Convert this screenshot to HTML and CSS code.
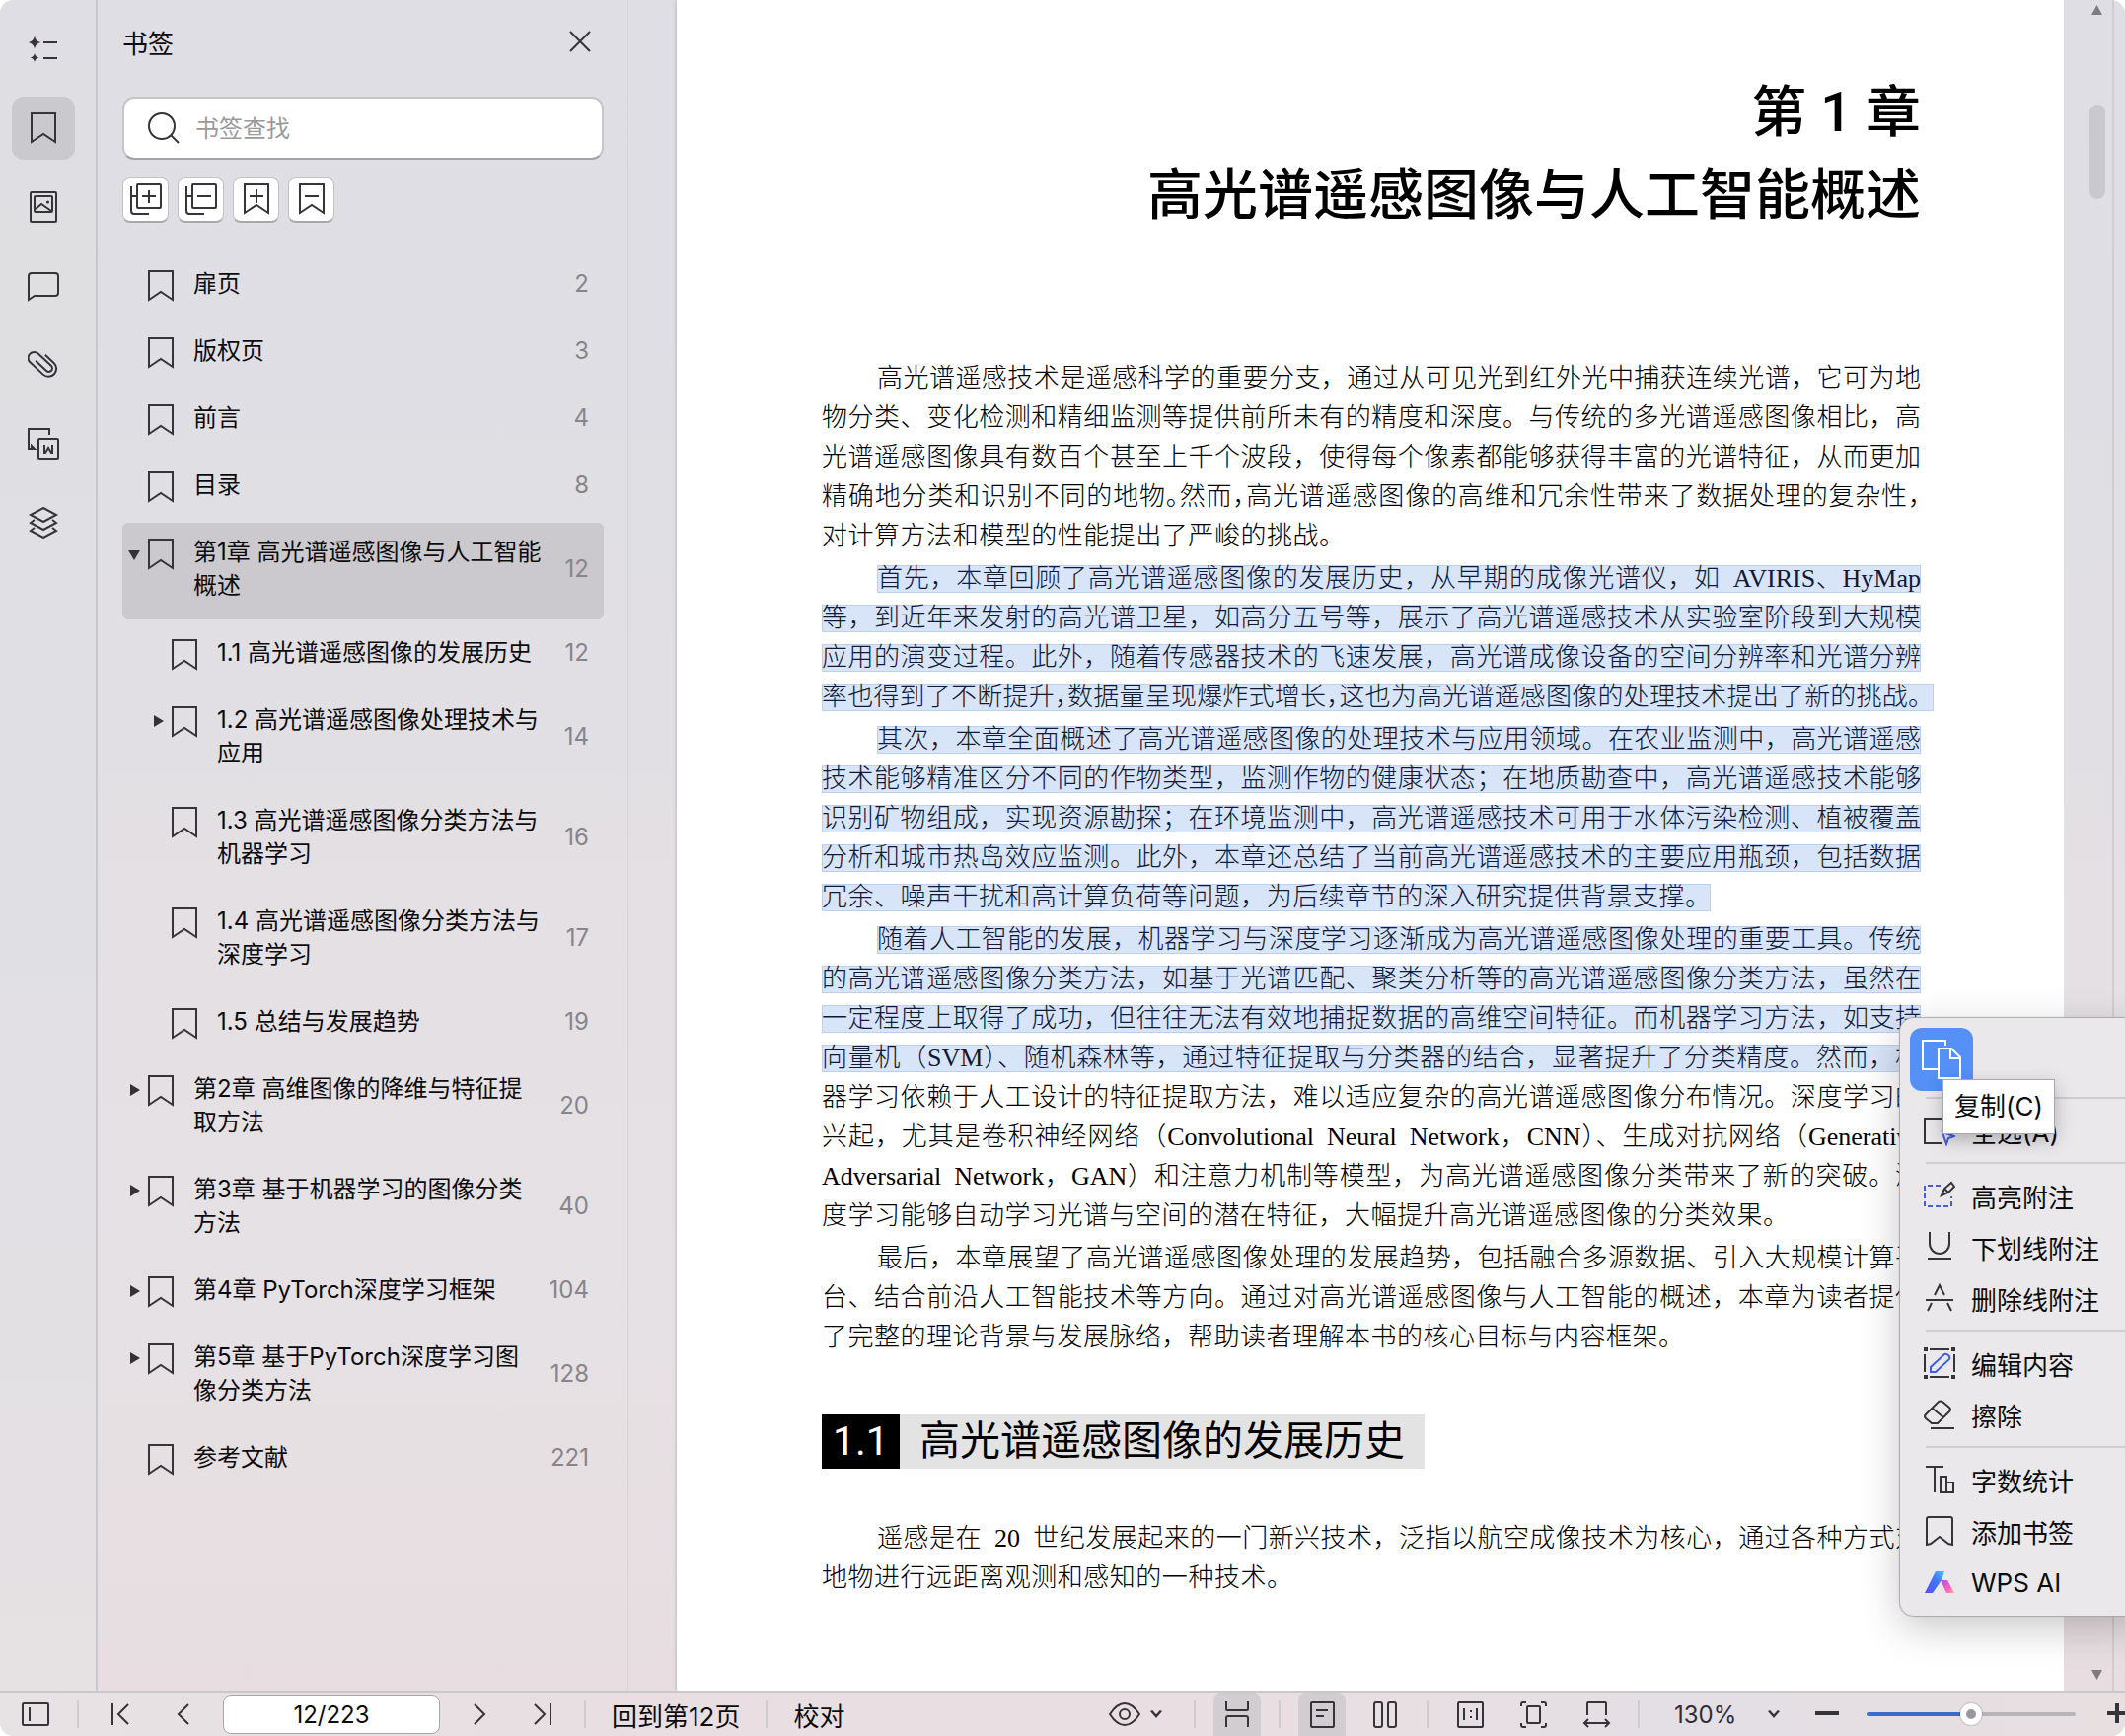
FILE: index.html
```html
<!DOCTYPE html>
<html lang="zh-CN">
<head>
<meta charset="utf-8">
<title>PDF 阅读器</title>
<link rel="stylesheet" href="styles.css">
</head>
<body>
<svg class="sprite" aria-hidden="true">
  <symbol id="i-bookmark" viewBox="0 0 26 32"><path d="M1 1h24v29l-12-8-12 8z"/></symbol>
  <symbol id="i-bm-plus" viewBox="0 0 26 32"><path d="M1 1h24v29l-12-8-12 8zM13 6v14M6 13h14"/></symbol>
  <symbol id="i-bm-minus" viewBox="0 0 26 32"><path d="M1 1h24v29l-12-8-12 8zM6 13h14"/></symbol>
  <symbol id="i-expand" viewBox="0 0 32 32"><rect x="7" y="1" width="24" height="24" rx="1"/><path d="M1 3v25a3 3 0 0 0 3 3h15M1 13h6M19 7v13M12 13h14"/></symbol>
  <symbol id="i-collapse" viewBox="0 0 32 32"><rect x="7" y="1" width="24" height="24" rx="1"/><path d="M1 3v25a3 3 0 0 0 3 3h15M1 13h6M12 13h14"/></symbol>
</svg>

<div class="app">
  <div class="workspace">
    <nav class="rail" aria-label="工具">
      <button type="button" aria-label="智能目录"><svg class="icon" viewBox="0 0 32 32"><path class="solid" d="M7 2.500q1 5.500 6.500 6.500q-5.500 1-6.500 6.500q-1-5.500-6.500-6.500q5.500-1 6.500-6.500zM7 20q.8 3.700 4.500 4.500q-3.700.8-4.500 4.500q-.8-3.700-4.500-4.500q3.700-.8 4.500-4.500z"/><path d="M16 9h14M16 25h14"/></svg></button>
      <button type="button" class="active" aria-label="书签"><svg class="icon bm"><use href="#i-bookmark"/></svg></button>
      <button type="button" aria-label="缩略图"><svg class="icon" viewBox="0 0 32 32"><rect x="3" y="1" width="26" height="30" rx="1"/><rect x="7" y="5" width="18" height="16" rx="1"/><path d="M8 18l6-5 10 7"/><circle class="solid" cx="20.500" cy="11" r="1.600"/></svg></button>
      <button type="button" aria-label="批注"><svg class="icon" viewBox="0 0 32 32"><path d="M1 30V6a3 3 0 0 1 3-3h24a3 3 0 0 1 3 3v17a3 3 0 0 1-3 3H7z"/></svg></button>
      <button type="button" aria-label="附件"><svg class="icon" viewBox="0 0 32 32"><path transform="rotate(43 16 15)" d="M8 18h15a3.500 3.500 0 0 0 0-7H5a6 6 0 0 0 0 12h18a8 8 0 0 0 0-16H11"/></svg></button>
      <button type="button" aria-label="转换"><svg class="icon" viewBox="0 0 32 32"><path d="M22 7V1H1v20h6M4 18l3 3h-3z"/><rect x="11" y="11" width="20" height="20" rx="1"/><path d="M17 17v8h1l3-5 3 5h1v-8"/></svg></button>
      <button type="button" aria-label="图层"><svg class="icon" viewBox="0 0 32 32"><path d="M16 1l13 7-13 7L3 8zM7 13l-4 3 13 7 13-7-4-3M7 21l-4 3 13 7 13-7-4-3"/></svg></button>
    </nav>

    <aside class="panel">
      <header class="panel-head">
        <h2>书签</h2>
        <button type="button" class="close" aria-label="关闭"><svg class="icon" viewBox="0 0 22 22"><path d="M1 1l20 20M21 1L1 21"/></svg></button>
      </header>
      <label class="search">
        <svg class="icon" viewBox="0 0 32 32"><circle cx="14" cy="14" r="13"/><path d="M23 23l8 8"/></svg>
        <input type="search" placeholder="书签查找" aria-label="书签查找">
      </label>
      <div class="tools">
        <button type="button" aria-label="全部展开"><svg class="icon"><use href="#i-expand"/></svg></button>
        <button type="button" aria-label="全部折叠"><svg class="icon"><use href="#i-collapse"/></svg></button>
        <button type="button" aria-label="添加书签"><svg class="icon bm"><use href="#i-bm-plus"/></svg></button>
        <button type="button" aria-label="删除书签"><svg class="icon bm"><use href="#i-bm-minus"/></svg></button>
      </div>
      <ul class="tree">
        <li><a href="#"><span class="arrow"></span><svg class="icon bm"><use href="#i-bookmark"/></svg><span class="name">扉页</span><span class="num">2</span></a></li>
        <li><a href="#"><span class="arrow"></span><svg class="icon bm"><use href="#i-bookmark"/></svg><span class="name">版权页</span><span class="num">3</span></a></li>
        <li><a href="#"><span class="arrow"></span><svg class="icon bm"><use href="#i-bookmark"/></svg><span class="name">前言</span><span class="num">4</span></a></li>
        <li><a href="#"><span class="arrow"></span><svg class="icon bm"><use href="#i-bookmark"/></svg><span class="name">目录</span><span class="num">8</span></a></li>
        <li><a href="#" class="selected"><span class="arrow open"></span><svg class="icon bm"><use href="#i-bookmark"/></svg><span class="name">第1章 高光谱遥感图像与人工智能<br>概述</span><span class="num">12</span></a>
          <ul>
            <li><a href="#"><span class="arrow"></span><svg class="icon bm"><use href="#i-bookmark"/></svg><span class="name">1.1 高光谱遥感图像的发展历史</span><span class="num">12</span></a></li>
            <li><a href="#"><span class="arrow closed"></span><svg class="icon bm"><use href="#i-bookmark"/></svg><span class="name">1.2 高光谱遥感图像处理技术与<br>应用</span><span class="num">14</span></a></li>
            <li><a href="#"><span class="arrow"></span><svg class="icon bm"><use href="#i-bookmark"/></svg><span class="name">1.3 高光谱遥感图像分类方法与<br>机器学习</span><span class="num">16</span></a></li>
            <li><a href="#"><span class="arrow"></span><svg class="icon bm"><use href="#i-bookmark"/></svg><span class="name">1.4 高光谱遥感图像分类方法与<br>深度学习</span><span class="num">17</span></a></li>
            <li><a href="#"><span class="arrow"></span><svg class="icon bm"><use href="#i-bookmark"/></svg><span class="name">1.5 总结与发展趋势</span><span class="num">19</span></a></li>
          </ul>
        </li>
        <li><a href="#"><span class="arrow closed"></span><svg class="icon bm"><use href="#i-bookmark"/></svg><span class="name">第2章 高维图像的降维与特征提<br>取方法</span><span class="num">20</span></a></li>
        <li><a href="#"><span class="arrow closed"></span><svg class="icon bm"><use href="#i-bookmark"/></svg><span class="name">第3章 基于机器学习的图像分类<br>方法</span><span class="num">40</span></a></li>
        <li><a href="#"><span class="arrow closed"></span><svg class="icon bm"><use href="#i-bookmark"/></svg><span class="name">第4章 PyTorch深度学习框架</span><span class="num">104</span></a></li>
        <li><a href="#"><span class="arrow closed"></span><svg class="icon bm"><use href="#i-bookmark"/></svg><span class="name">第5章 基于PyTorch深度学习图<br>像分类方法</span><span class="num">128</span></a></li>
        <li><a href="#"><span class="arrow"></span><svg class="icon bm"><use href="#i-bookmark"/></svg><span class="name">参考文献</span><span class="num">221</span></a></li>
      </ul>
    </aside>

    <main class="viewer">
      <article class="page">
        <h1>第 1 章<br>高光谱遥感图像与人工智能概述</h1>
        <p>
          <span class="line first">高光谱遥感技术是遥感科学的重要分支，通过从可见光到红外光中捕获连续光谱，它可为地</span>
          <span class="line">物分类、变化检测和精细监测等提供前所未有的精度和深度。与传统的多光谱遥感图像相比，高</span>
          <span class="line">光谱遥感图像具有数百个甚至上千个波段，使得每个像素都能够获得丰富的光谱特征，从而更加</span>
          <span class="line">精确地分类和识别不同的地物<span class="half">。</span>然而<span class="half">，</span>高光谱遥感图像的高维和冗余性带来了数据处理的复杂性<span class="half">，</span></span>
          <span class="line chars-20">对计算方法和模型的性能提出了严峻的挑战。</span>
        </p>
        <p>
          <mark class="line first">首先，本章回顾了高光谱遥感图像的发展历史，从早期的成像光谱仪，如&ensp;AVIRIS、HyMap</mark>
          <mark class="line">等，到近年来发射的高光谱卫星，如高分五号等，展示了高光谱遥感技术从实验室阶段到大规模</mark>
          <mark class="line">应用的演变过程。此外，随着传感器技术的飞速发展，高光谱成像设备的空间分辨率和光谱分辨</mark>
          <mark class="line hang">率也得到了不断提升<span class="half">，</span>数据量呈现爆炸式增长<span class="half">，</span>这也为高光谱遥感图像的处理技术提出了新的挑战。</mark>
        </p>
        <p>
          <mark class="line first">其次，本章全面概述了高光谱遥感图像的处理技术与应用领域。在农业监测中，高光谱遥感</mark>
          <mark class="line">技术能够精准区分不同的作物类型，监测作物的健康状态；在地质勘查中，高光谱遥感技术能够</mark>
          <mark class="line">识别矿物组成，实现资源勘探；在环境监测中，高光谱遥感技术可用于水体污染检测、植被覆盖</mark>
          <mark class="line">分析和城市热岛效应监测。此外，本章还总结了当前高光谱遥感技术的主要应用瓶颈，包括数据</mark>
          <mark class="line chars-34">冗余、噪声干扰和高计算负荷等问题，为后续章节的深入研究提供背景支撑。</mark>
        </p>
        <p>
          <mark class="line first">随着人工智能的发展，机器学习与深度学习逐渐成为高光谱遥感图像处理的重要工具。传统</mark>
          <mark class="line">的高光谱遥感图像分类方法，如基于光谱匹配、聚类分析等的高光谱遥感图像分类方法，虽然在</mark>
          <mark class="line">一定程度上取得了成功，但往往无法有效地捕捉数据的高维空间特征。而机器学习方法，如支持</mark>
          <mark class="line">向量机（SVM）、随机森林等，通过特征提取与分类器的结合，显著提升了分类精度。然而，机</mark>
          <span class="line">器学习依赖于人工设计的特征提取方法，难以适应复杂的高光谱遥感图像分布情况。深度学习的</span>
          <span class="line">兴起，尤其是卷积神经网络（Convolutional&ensp;Neural&ensp;Network，CNN）、生成对抗网络（Generative</span>
          <span class="line">Adversarial&ensp;Network，GAN）和注意力机制等模型，为高光谱遥感图像分类带来了新的突破。深</span>
          <span class="line chars-37">度学习能够自动学习光谱与空间的潜在特征，大幅提升高光谱遥感图像的分类效果。</span>
        </p>
        <p>
          <span class="line first">最后，本章展望了高光谱遥感图像处理的发展趋势，包括融合多源数据、引入大规模计算平</span>
          <span class="line">台、结合前沿人工智能技术等方向。通过对高光谱遥感图像与人工智能的概述，本章为读者提供</span>
          <span class="line chars-33">了完整的理论背景与发展脉络，帮助读者理解本书的核心目标与内容框架。</span>
        </p>
        <h2><span class="sec-no">1.1</span><span class="sec-name">高光谱遥感图像的发展历史</span></h2>
        <p>
          <span class="line first">遥感是在&ensp;20&ensp;世纪发展起来的一门新兴技术，泛指以航空成像技术为核心，通过各种方式对</span>
          <span class="line chars-18">地物进行远距离观测和感知的一种技术。</span>
        </p>
      </article>
    </main>

    <div class="scrollbar" aria-hidden="true">
      <span class="tri up"></span><span class="thumb"></span><span class="tri down"></span>
    </div>
    <div class="edge"></div>

    <div class="menu" role="menu">
      <button type="button" class="copy" role="menuitem" aria-label="复制(C)"><svg class="icon" viewBox="0 0 40 40"><path d="M24 6V1H1v29h16"/><path d="M17 9h13l9 9v21H17zM29 9v10h10"/></svg></button>
      <hr>
      <button type="button" class="item" role="menuitem"><svg class="icon" viewBox="0 0 32 32"><path d="M18 29H1V4h29v12"/><path class="blue" d="M19 18l12 4-6 2-2 6z"/></svg>全选(A)</button>
      <hr>
      <button type="button" class="item" role="menuitem"><svg class="icon" viewBox="0 0 32 32"><path class="blue dash" d="M17 6H1v21h27V17"/><path d="M18 16l3-7 7-6 3 4-6 6zM21 9l4 4"/></svg>高亮附注</button>
      <button type="button" class="item" role="menuitem"><svg class="icon" viewBox="0 0 32 32"><path d="M6 1v12a10 10 0 0 0 20 0V1M4 28h24"/></svg>下划线附注</button>
      <button type="button" class="item" role="menuitem"><svg class="icon" viewBox="0 0 32 32"><path d="M2 18h28M11 13l5-10 5 10M8 21l-4 8M24 21l4 8"/></svg>删除线附注</button>
      <hr>
      <button type="button" class="item" role="menuitem"><svg class="icon" viewBox="0 0 32 32"><path d="M6 2h20M6 30h20M1 7v18M31 7v18"/><path class="solid" d="M0 0h4v4H0zM28 0h4v4h-4zM0 28h4v4H0zM28 28h4v4h-4z"/><path class="blue" d="M7 25v-5L21 7q2-1 4 1t1 4L12 25z"/></svg>编辑内容</button>
      <button type="button" class="item" role="menuitem"><svg class="icon" viewBox="0 0 32 32"><path d="M8 25l-6-5q-2-2 0-4L15 3q2-1 4 0l7 6q2 2 0 4L14 25zM9 10l11 9M7 30h24"/></svg>擦除</button>
      <hr>
      <button type="button" class="item" role="menuitem"><svg class="icon" viewBox="0 0 32 32"><path d="M2 3h18M11 3v26M17 13h6v16h-6zM23 19h7v10h-7"/></svg>字数统计</button>
      <button type="button" class="item" role="menuitem"><svg class="icon" viewBox="0 0 32 32"><path d="M3 30V4a2 2 0 0 1 2-2h22a2 2 0 0 1 2 2v26l-4-1-9-7-9 7z"/></svg>添加书签</button>
      <button type="button" class="item" role="menuitem"><svg class="logo" viewBox="0 0 32 32"><defs><linearGradient id="ai-a" x1="0" y1="1" x2="1" y2="0"><stop offset="0" stop-color="#5a4cf6"/><stop offset=".6" stop-color="#3f7bf8"/><stop offset="1" stop-color="#4fc3fa"/></linearGradient><linearGradient id="ai-b" x1="0" y1="0" x2="1" y2="1"><stop offset="0" stop-color="#b04cf5"/><stop offset=".6" stop-color="#ff5fc0"/><stop offset="1" stop-color="#ffb08a"/></linearGradient></defs><path fill="url(#ai-a)" d="M12 5h9l-3 9-9 13H1z"/><path fill="url(#ai-b)" d="M17 14h7l7 13h-8z"/></svg>WPS AI</button>
    </div>
    <div class="tooltip" role="tooltip">复制(C)</div>
  </div>

  <footer class="statusbar">
    <div class="group">
      <button type="button" aria-label="侧边栏"><svg class="icon" viewBox="0 0 32 32"><rect x="3" y="5" width="26" height="22" rx="1"/><path d="M10 9v14"/></svg></button>
      <span class="sep"></span>
      <button type="button" aria-label="第一页"><svg class="icon" viewBox="0 0 32 32"><path d="M8 5v22M24 6L14 16l10 10"/></svg></button>
      <button type="button" aria-label="上一页"><svg class="icon" viewBox="0 0 32 32"><path d="M21 6L11 16l10 10"/></svg></button>
      <input type="text" class="pageno" value="12/223" aria-label="页码">
      <button type="button" aria-label="下一页"><svg class="icon" viewBox="0 0 32 32"><path d="M11 6l10 10-10 10"/></svg></button>
      <button type="button" aria-label="最后一页"><svg class="icon" viewBox="0 0 32 32"><path d="M24 5v22M8 6l10 10L8 26"/></svg></button>
      <span class="sep"></span>
      <button type="button" class="text">回到第12页</button>
      <span class="sep"></span>
      <button type="button" class="text">校对</button>
    </div>
    <div class="group right">
      <button type="button" class="eye" aria-label="显示"><svg class="icon" viewBox="0 0 32 32"><path d="M1 16q7-11 15-11t15 11q-7 11-15 11T1 16z"/><circle cx="16" cy="16" r="5"/></svg><span class="chev"></span></button>
      <span class="sep"></span>
      <button type="button" class="on" aria-label="连续阅读"><svg class="icon" viewBox="0 0 32 32"><path d="M5 3v8q0 1 1 1h20q1 0 1-1V3M5 29v-9q0-2 2-2h18q2 0 2 2v9"/></svg></button>
      <span class="sep"></span>
      <button type="button" class="on" aria-label="单页"><svg class="icon" viewBox="0 0 32 32"><rect x="5" y="4" width="23" height="25" rx="1"/><path d="M10 12h12M10 18h8"/></svg></button>
      <button type="button" aria-label="双页"><svg class="icon" viewBox="0 0 32 32"><rect x="5" y="4" width="8" height="25" rx="2"/><rect x="19" y="4" width="8" height="25" rx="2"/></svg></button>
      <span class="sep"></span>
      <button type="button" aria-label="实际大小"><svg class="icon" viewBox="0 0 32 32"><rect x="4" y="4" width="25" height="25" rx="1"/><path d="M10 10v12M23 10v12M17 12v2M17 18v2"/></svg></button>
      <button type="button" aria-label="适合页面"><svg class="icon" viewBox="0 0 32 32"><rect x="10" y="8" width="13" height="17" rx="1"/><path d="M4 8V6q0-2 2-2h3M24 4h3q2 0 2 2v2M4 25v2q0 2 2 2h3M24 29h3q2 0 2-2v-2"/></svg></button>
      <button type="button" aria-label="适合宽度"><svg class="icon" viewBox="0 0 32 32"><path d="M7 17V5q0-1 1-1h17q1 0 1 1v12M4 25h25M8 21l-4 4 4 4M25 21l4 4-4 4"/></svg></button>
      <span class="sep"></span>
      <label class="zoom"><select aria-label="缩放比例"><option>130%</option></select><span class="chev"></span></label>
      <button type="button" class="step" aria-label="缩小"><svg class="icon bold" viewBox="0 0 32 32"><path d="M4 15h24"/></svg></button>
      <input type="range" class="slider" min="0" max="100" value="50" aria-label="缩放">
      <button type="button" class="plus" aria-label="放大"><svg class="icon bold" viewBox="0 0 32 32"><path d="M6 15h20M16 5v20"/></svg></button>
    </div>
  </footer>
</div>
</body>
</html>
```

FILE: styles.css
```css
* { box-sizing: border-box; }

body {
  margin: 0;
  background: #fff;
  color: #0c0c0c;
  font-family: Inter, "Noto Sans CJK SC", sans-serif;
  font-size: 24px;
}

button, input, select {
  font: inherit;
  color: inherit;
  border: 0;
  padding: 0;
  background: none;
}

h1, h2, p, ul { margin: 0; padding: 0; }
ul { list-style: none; }
a { color: inherit; text-decoration: none; }

.sprite { display: none; }

.icon {
  flex: none;
  width: 32px;
  height: 32px;
  fill: none;
  stroke: #363438;
  stroke-width: 2;
}
.icon.bm { width: 26px; }
.icon.bold { stroke-width: 4; }
.icon .solid { fill: #363438; stroke: none; }
.icon .blue { stroke: #3f62d8; }
.icon .dash { stroke-dasharray: 5 3; }

.app {
  display: grid;
  grid-template-rows: minmax(0, 1fr) auto;
  height: 100vh;
  overflow: hidden;
  border-radius: 14px;
  background: linear-gradient(#dfdee4, #e0dfe4 30%, #e4e0e4 52%, #e6e1e4 78%, #e8dde0);
}

.workspace {
  position: relative;
  display: grid;
  grid-template-columns: 99px 538px minmax(0, 1fr) 51px 11px;
  overflow: hidden;
}

/* icon rail */
.rail {
  display: flex;
  flex-direction: column;
  gap: 16px;
  padding: 18px 0 0 12px;
  border-right: 2px solid #c8c7cb;
  background: linear-gradient(#dfdee4, #dfdfe1 18%, #dfdfe4 30%, #e2e0e4 70%, #e6e1e3);
}
.rail button {
  display: grid;
  place-items: center;
  width: 64px;
  height: 64px;
  border-radius: 12px;
}
.rail .active { background: #cac9ce; }

/* bookmark panel */
.panel {
  padding: 0 24px 0 25px;
  border-right: 1px solid #d6d4d8;
}
.panel-head {
  display: flex;
  align-items: center;
  justify-content: space-between;
  height: 84px;
  padding-right: 13px;
}
.panel-head h2 { font-size: 26px; font-weight: 400; }
.close { display: grid; }
.close .icon { width: 22px; height: 22px; }

.search {
  display: flex;
  align-items: center;
  gap: 16px;
  height: 64px;
  margin-top: 14px;
  padding: 0 24px;
  border: 2px solid #c6c5ca;
  border-bottom-color: #a3a2a6;
  border-radius: 12px;
  background: #fff;
}
.search input { flex: 1; min-width: 0; outline: 0; }
.search input::placeholder { color: #9b9b9b; opacity: 1; }

.tools { display: flex; gap: 9px; margin-top: 17px; }
.tools button {
  display: grid;
  place-items: center;
  width: 47px;
  height: 47px;
  border: 1px solid #c2c1c6;
  border-bottom: 2px solid #a9a8ac;
  border-radius: 8px;
  background: #fff;
}

.tree { margin-top: 32px; line-height: 34px; }
.tree a {
  display: flex;
  align-items: flex-start;
  margin-bottom: 4px;
  padding: 13px 15px 17px 6px;
  border-radius: 6px;
}
.tree .selected { background: #cbc9ce; }
.tree ul a { padding-left: 30px; }
.tree .icon { margin: 3px 20px -1px 0; }
.tree .name { flex: 1; white-space: nowrap; }
.tree .num { align-self: center; color: #87858a; }

.arrow { flex: none; width: 20px; height: 34px; }
.arrow::before { content: ""; display: block; background: #333; }
.arrow.open::before {
  width: 12px;
  height: 10px;
  margin-top: 15px;
  clip-path: polygon(0 0, 100% 0, 50% 100%);
}
.arrow.closed::before {
  width: 10px;
  height: 12px;
  margin: 12px 0 0 2px;
  clip-path: polygon(0 0, 100% 50%, 0 100%);
}

/* document */
.viewer { padding-left: 49px; overflow: hidden; }
.page {
  height: 100%;
  padding: 72px 145px 0 147px;
  background: #fff;
  box-shadow: 0 0 4px #a9a7ad;
  color: #000;
  font-family: "Liberation Serif", "Noto Sans CJK SC", serif;
  font-size: 26px;
  font-weight: 300;
}
.page h1 {
  margin-bottom: 124px;
  font-family: Roboto, "Noto Sans CJK SC", sans-serif;
  font-size: 56px;
  font-weight: 500;
  line-height: 84px;
  text-align: right;
}
.page p {
  display: flex;
  flex-direction: column;
  gap: 12px;
  margin-bottom: 3px;
  padding: 6px 0;
  line-height: 28px;
}
.line {
  display: block;
  height: 28px;
  text-align: justify;
  text-align-last: justify;
}
.line.first { margin-left: 56px; }
.line.hang { margin-right: -13px; }
.half { font-feature-settings: "halt"; }
.chars-18 { width: 477px; }
.chars-20 { width: 530px; }
.chars-33 { width: 874px; }
.chars-34 { width: 901px; }
.chars-37 { width: 980px; }

mark {
  background: #d8e4f8;
  box-shadow: inset 0 0 0 1px #bdcfee;
  color: #0f1a38;
}

.page h2 {
  display: flex;
  margin: 58px 0 51px;
  font-family: Roboto, "Noto Sans CJK SC", sans-serif;
  font-size: 41px;
  font-weight: 400;
  line-height: 55px;
}
.sec-no { padding: 0 11px; background: #000; color: #fff; }
.sec-name { padding: 0 20px; background: #e3e3e3; }

/* scrollbar */
.scrollbar {
  display: flex;
  flex-direction: column;
  align-items: center;
  padding: 5px 0 11px 18px;
  border-right: 2px solid #cfcdd2;
}
.tri { width: 11px; height: 10px; background: #7d7b80; }
.tri.up { clip-path: polygon(50% 0, 100% 100%, 0 100%); }
.tri.down { margin-top: auto; clip-path: polygon(0 0, 100% 0, 50% 100%); }
.thumb {
  width: 16px;
  height: 96px;
  margin-top: 91px;
  border-radius: 8px;
  background: #c9c8cd;
}

/* context menu */
.menu {
  position: absolute;
  top: 1032px;
  right: -20px;
  width: 248px;
  padding: 10px 0 8px 10px;
  border-radius: 14px;
  background: #eae8eb;
  box-shadow: 0 0 1px 1px #a9a8ab, 0 12px 40px #00000038;
  font-size: 26px;
}
.menu hr {
  height: 2px;
  margin: 6px 0 6px 16px;
  border: 0;
  background: #cfcdd0;
}
.copy {
  display: grid;
  place-items: center;
  width: 64px;
  height: 64px;
  border-radius: 12px;
  background: #5590f7;
}
.copy .icon { width: 40px; height: 40px; stroke: #fff; }
.item {
  display: flex;
  align-items: center;
  gap: 16px;
  width: 100%;
  height: 52px;
  padding-left: 14px;
  white-space: nowrap;
}
.logo { flex: none; width: 32px; height: 32px; }
.tooltip {
  position: absolute;
  top: 1094px;
  right: 71px;
  padding: 0 11px;
  border: 1px solid #a8a8a8;
  background: #fff;
  box-shadow: 0 6px 18px #00000040;
  font-size: 26px;
  line-height: 54px;
}

/* status bar */
.statusbar {
  display: flex;
  justify-content: space-between;
  height: 46px;
  overflow: hidden;
  border-top: 2px solid #cbc8cb;
  background: linear-gradient(90deg, #e7e2e4, #e9dee1 35%, #e9dfe2 62%, #e3dfe4 80%, #e8dfe1);
  font-size: 26px;
}
.group { display: flex; align-items: center; gap: 16px; padding-left: 12px; }
.group.right { margin-right: -18px; padding: 0; }
.group button {
  display: flex;
  flex: none;
  align-items: center;
  justify-content: center;
  width: 48px;
  height: 44px;
  white-space: nowrap;
}
.group .on { border-radius: 8px 8px 0 0; background: #d2cdd0; }
.group .text { width: auto; padding: 0 8px; }
.group .eye { justify-content: flex-start; gap: 10px; width: 72px; padding-left: 4px; }
.group .step { width: 40px; }
.group .plus { width: 52px; }
.sep { width: 2px; height: 28px; margin: 0 2px; background: #d0cbce; }
.pageno {
  width: 220px;
  height: 40px;
  border: 1px solid #a9a6aa;
  border-radius: 8px;
  background: #fff;
  font-size: 24px;
  text-align: center;
}
.chev {
  width: 12px;
  height: 8px;
  background: #363438;
  clip-path: polygon(0 12%, 18% 0, 50% 52%, 82% 0, 100% 12%, 50% 100%);
}
.zoom { display: flex; align-items: center; width: 136px; padding: 0 12px 0 17px; }
.zoom select { flex: 1; min-width: 0; appearance: none; color: #2f2d36; font-size: 24px; }

.slider { width: 212px; height: 24px; margin: 0 0 0 4px; appearance: none; }
.slider::-webkit-slider-runnable-track {
  height: 4px;
  border-radius: 2px;
  background: linear-gradient(90deg, #3a6bc9 50%, #b9b4b8 50%);
}
.slider::-webkit-slider-thumb {
  width: 22px;
  height: 22px;
  margin-top: -9px;
  appearance: none;
  border: 6px solid #fff;
  border-radius: 50%;
  background: #9b979b;
  box-shadow: 0 0 2px #00000070;
}
```
